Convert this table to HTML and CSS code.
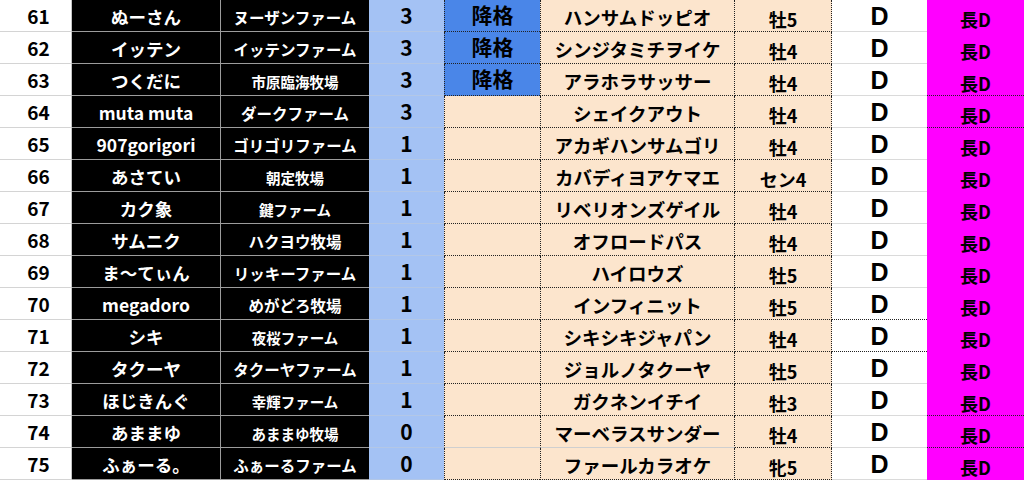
FILE: index.html
```html
<!DOCTYPE html>
<html lang="ja">
<head>
<meta charset="utf-8">
<title>ランキング</title>
<link rel="stylesheet" href="styles.css">
</head>
<body>
<div class="sheet">
  <div class="c no">61</div><div class="c nm">ぬーさん</div><div class="c fm">ヌーザンファーム</div><div class="c pt">3</div><div class="c st down">降格</div><div class="c hs">ハンサムドッピオ</div><div class="c ag">牡5</div><div class="c rk">D</div><div class="c lg">長D</div>
  <div class="c no">62</div><div class="c nm">イッテン</div><div class="c fm">イッテンファーム</div><div class="c pt">3</div><div class="c st down">降格</div><div class="c hs">シンジタミチヲイケ</div><div class="c ag">牡4</div><div class="c rk">D</div><div class="c lg">長D</div>
  <div class="c no">63</div><div class="c nm">つくだに</div><div class="c fm sm">市原臨海牧場</div><div class="c pt">3</div><div class="c st down">降格</div><div class="c hs">アラホラサッサー</div><div class="c ag">牡4</div><div class="c rk">D</div><div class="c lg dot">長D</div>
  <div class="c no">64</div><div class="c nm">muta muta</div><div class="c fm">ダークファーム</div><div class="c pt">3</div><div class="c st"></div><div class="c hs">シェイクアウト</div><div class="c ag">牡4</div><div class="c rk">D</div><div class="c lg dot">長D</div>
  <div class="c no">65</div><div class="c nm">907gorigori</div><div class="c fm">ゴリゴリファーム</div><div class="c pt">1</div><div class="c st"></div><div class="c hs">アカギハンサムゴリ</div><div class="c ag">牡4</div><div class="c rk">D</div><div class="c lg">長D</div>
  <div class="c no">66</div><div class="c nm">あさてい</div><div class="c fm sm">朝定牧場</div><div class="c pt">1</div><div class="c st"></div><div class="c hs">カバディヨアケマエ</div><div class="c ag">セン4</div><div class="c rk">D</div><div class="c lg">長D</div>
  <div class="c no">67</div><div class="c nm">カク象</div><div class="c fm sm">鍵ファーム</div><div class="c pt">1</div><div class="c st"></div><div class="c hs">リベリオンズゲイル</div><div class="c ag">牡4</div><div class="c rk">D</div><div class="c lg">長D</div>
  <div class="c no">68</div><div class="c nm">サムニク</div><div class="c fm">ハクヨウ牧場</div><div class="c pt">1</div><div class="c st"></div><div class="c hs">オフロードパス</div><div class="c ag">牡4</div><div class="c rk">D</div><div class="c lg">長D</div>
  <div class="c no">69</div><div class="c nm">ま～てぃん</div><div class="c fm">リッキーファーム</div><div class="c pt">1</div><div class="c st"></div><div class="c hs">ハイロウズ</div><div class="c ag">牡5</div><div class="c rk">D</div><div class="c lg">長D</div>
  <div class="c no">70</div><div class="c nm">megadoro</div><div class="c fm">めがどろ牧場</div><div class="c pt">1</div><div class="c st"></div><div class="c hs">インフィニット</div><div class="c ag">牡5</div><div class="c rk dot">D</div><div class="c lg">長D</div>
  <div class="c no">71</div><div class="c nm">シキ</div><div class="c fm sm">夜桜ファーム</div><div class="c pt">1</div><div class="c st"></div><div class="c hs">シキシキジャパン</div><div class="c ag">牡4</div><div class="c rk dot">D</div><div class="c lg">長D</div>
  <div class="c no">72</div><div class="c nm">タクーヤ</div><div class="c fm">タクーヤファーム</div><div class="c pt">1</div><div class="c st"></div><div class="c hs">ジョルノタクーヤ</div><div class="c ag">牡5</div><div class="c rk">D</div><div class="c lg">長D</div>
  <div class="c no">73</div><div class="c nm">ほじきんぐ</div><div class="c fm sm">幸輝ファーム</div><div class="c pt">1</div><div class="c st"></div><div class="c hs">ガクネンイチイ</div><div class="c ag">牡3</div><div class="c rk">D</div><div class="c lg dot">長D</div>
  <div class="c no">74</div><div class="c nm">あままゆ</div><div class="c fm sm">あままゆ牧場</div><div class="c pt">0</div><div class="c st gray"></div><div class="c hs gray">マーベラスサンダー</div><div class="c ag">牡4</div><div class="c rk">D</div><div class="c lg dot">長D</div>
  <div class="c no">75</div><div class="c nm">ふぁーる。</div><div class="c fm">ふぁーるファーム</div><div class="c pt">0</div><div class="c st"></div><div class="c hs">ファールカラオケ</div><div class="c ag">牝5</div><div class="c rk">D</div><div class="c lg">長D</div>
</div>
</body>
</html>
```

FILE: styles.css
```css
* { box-sizing: border-box; }

html, body {
  margin: 0;
  padding: 0;
  background: #ffffff;
}

body {
  font-family: "Noto Sans CJK JP", "Noto Sans", sans-serif;
  font-weight: 700;
  color: #000000;
}

.sheet {
  display: grid;
  grid-template-columns: 72px 149px 148px 75px 96px 195px 97px 95px 97px;
  grid-auto-rows: 32px;
  width: 1024px;
  height: 480px;
  overflow: hidden;
}

.c {
  display: flex;
  align-items: center;
  justify-content: center;
  white-space: nowrap;
  line-height: 1.2;
}

/* row number */
.no {
  background: #ffffff;
  border-bottom: 1px solid #d4d4d4;
  border-right: 1px solid #c4c4c4;
  font-size: 19px;
  padding: 2px 0 0 6px;
}

/* owner name */
.nm {
  background: #000000;
  color: #ffffff;
  border-bottom: 1px solid #9c9c9c;
  border-right: 1px solid #9c9c9c;
  font-size: 17.5px;
  padding-top: 2px;
}

/* farm name */
.fm {
  background: #000000;
  color: #ffffff;
  border-bottom: 1px solid #9c9c9c;
  font-size: 15.5px;
  padding-top: 4px;
}
.fm.sm { font-size: 14.5px; }

/* points */
.pt {
  background: #a4c2f4;
  border-bottom: 1px solid #b3c7e6;
  font-size: 21px;
  line-height: 1;
}

/* status */
.st {
  background: #fce5cd;
  border-left: 1px dotted #222222;
  border-bottom: 1px dotted #222222;
  font-size: 21px;
  line-height: 1;
  padding-bottom: 3px;
}
.st.down { background: #4a86e8; }
.st.gray { border-bottom: 1px solid #cfcfcf; }

/* horse */
.hs {
  background: #fce5cd;
  border-left: 1px dotted #222222;
  border-right: 1px dotted #222222;
  border-bottom: 1px dotted #222222;
  font-size: 18.5px;
  padding-top: 4px;
}
.hs.gray { border-bottom: 1px solid #cfcfcf; }

/* age */
.ag {
  background: #fce5cd;
  border-right: 1px dotted #222222;
  border-bottom: 1px dotted #222222;
  font-size: 18px;
  padding-top: 8px;
}

/* rank */
.rk {
  background: #ffffff;
  border-bottom: 1px solid #dadada;
  font-family: "Liberation Sans", Arial, sans-serif;
  font-size: 25px;
  line-height: 1;
  padding-top: 2px;
}
.rk.dot { border-bottom: 1px dotted #222222; }

/* long rank */
.lg {
  background: #ff00ff;
  font-size: 18px;
  padding-top: 8px;
}
.lg.dot { border-bottom: 1px dotted #222222; }
```
